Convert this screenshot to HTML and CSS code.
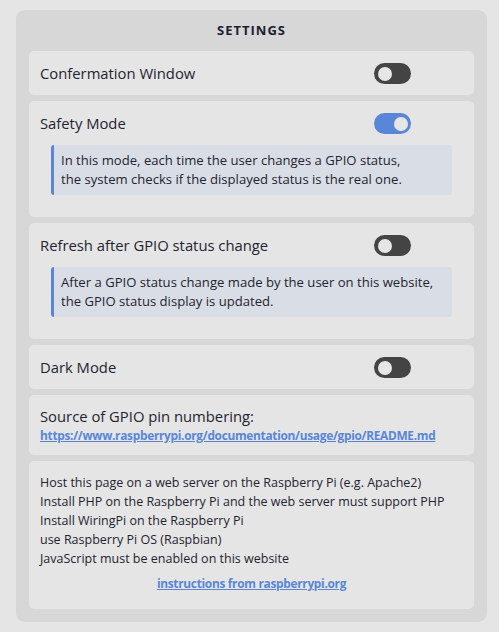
FILE: index.html
```html
<!DOCTYPE html>
<html lang="en">
<head>
<meta charset="utf-8">
<title>Settings</title>
<link rel="stylesheet" href="styles.css">
</head>
<body>
<div class="panel">
  <h2 class="title">SETTINGS</h2>
  <div class="cards">
    <div class="card">
      <div class="row">
        <span class="label">Confermation Window</span>
        <span class="toggle"><span class="knob"></span></span>
      </div>
    </div>
    <div class="card card-info">
      <div class="row">
        <span class="label">Safety Mode</span>
        <span class="toggle on"><span class="knob"></span></span>
      </div>
      <div class="info">In this mode, each time the user changes a GPIO status,<br>the system checks if the displayed status is the real one.</div>
    </div>
    <div class="card card-info">
      <div class="row">
        <span class="label">Refresh after GPIO status change</span>
        <span class="toggle"><span class="knob"></span></span>
      </div>
      <div class="info">After a GPIO status change made by the user on this website,<br>the GPIO status display is updated.</div>
    </div>
    <div class="card">
      <div class="row">
        <span class="label">Dark Mode</span>
        <span class="toggle"><span class="knob"></span></span>
      </div>
    </div>
    <div class="card card-text">
      <div class="label">Source of GPIO pin numbering:</div>
      <a class="link" href="#">https://www.raspberrypi.org/documentation/usage/gpio/README.md</a>
    </div>
    <div class="card card-req">
      <ul class="reqs">
        <li>Host this page on a web server on the Raspberry Pi (e.g. Apache2)</li>
        <li>Install PHP on the Raspberry Pi and the web server must support PHP</li>
        <li>Install WiringPi on the Raspberry Pi</li>
        <li>use Raspberry Pi OS (Raspbian)</li>
        <li>JavaScript must be enabled on this website</li>
      </ul>
      <div class="center"><a class="link" href="#">instructions from raspberrypi.org</a></div>
    </div>
  </div>
</div>
</body>
</html>
```

FILE: styles.css
```css
* { box-sizing: border-box; }
html, body { margin: 0; padding: 0; }
body {
  background: #e5e5e5;
  font-family: "Open Sans", "Liberation Sans", sans-serif;
  color: #1f2430;
  padding: 10px 12px 11px 16px;
}
.panel {
  background: #d7d7d7;
  border-radius: 9px;
  padding: 0 13px 13px 13px;
}
.title {
  margin: 0;
  height: 41px;
  padding-top: 12px;
  text-align: center;
  font-size: 13px;
  font-weight: 700;
  letter-spacing: 1px;
  line-height: 17px;
  color: #1b2230;
}
.cards {
  display: flex;
  flex-direction: column;
  gap: 6px;
}
.card {
  background: #e5e5e5;
  border-radius: 5px;
  padding: 12px 11px 11px 11px;
}
.row {
  display: flex;
  align-items: center;
  height: 21px;
}
.label {
  width: 334px;
  font-size: 14.8px;
  line-height: 19px;
  white-space: nowrap;
}
.toggle {
  width: 37px;
  height: 21px;
  border-radius: 11px;
  background: #444444;
  position: relative;
  display: block;
}
.toggle .knob {
  position: absolute;
  top: 3.5px;
  left: 3.5px;
  width: 14px;
  height: 14px;
  border-radius: 50%;
  background: #e6e6e6;
}
.toggle.on { background: #5a86d8; }
.toggle.on .knob { left: 19.5px; }
.card-info { padding-bottom: 22px; }
.info {
  margin: 11px 11px 0 11px;
  background: #d9dee6;
  border-left: 3px solid #5a86d8;
  border-radius: 3px;
  padding: 6px 7px;
  font-size: 13.1px;
  line-height: 19px;
  white-space: nowrap;
}
.card-text { padding: 12px 11px 10px 11px; }
.link {
  color: #5a86d8;
  font-weight: 700;
  font-size: 11.9px;
  line-height: 19px;
  letter-spacing: -0.3px;
  text-decoration: underline;
}
.card-text .link { display: block; }
.card-req { padding: 12px 11px 16px 11px; }
.reqs {
  list-style: none;
  margin: 0;
  padding: 0;
  font-size: 12.5px;
  line-height: 19px;
  white-space: nowrap;
}
.center {
  text-align: center;
  margin-top: 5px;
  line-height: 19px;
}
```
